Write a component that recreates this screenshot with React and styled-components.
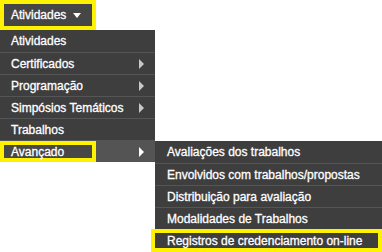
import React from 'react'
import styled, { createGlobalStyle, css } from 'styled-components'

const GlobalStyle = createGlobalStyle`
  html, body {
    margin: 0;
    padding: 0;
    background: #fff;
    overflow: hidden;
  }
  body {
    font-family: 'Liberation Sans', Arial, sans-serif;
    font-size: 12px;
    -webkit-text-stroke: 0.3px #fff;
  }
`

const yellow = '#fff200'

const Nav = styled.nav`
  display: flex;
  flex-direction: column;
  align-items: flex-start;
  width: 382px;
  height: 252px;
`

const TopButton = styled.div`
  box-sizing: border-box;
  height: 30px;
  width: 96px;
  display: flex;
  align-items: center;
  gap: 7px;
  padding-left: 7px;
  border: 4px solid ${yellow};
  background: #464646;
  color: #fff;
`

const DownCaret = styled.span`
  width: 0;
  height: 0;
  border-left: 4px solid transparent;
  border-right: 4px solid transparent;
  border-top: 5px solid #fff;
  margin-top: 1px;
`

const Menu = styled.ul`
  list-style: none;
  margin: 0;
  padding: 0;
  width: ${p => p.$width}px;
  background: #3e3e3e;
`

const Item = styled.li`
  position: relative;
  box-sizing: border-box;
  height: 22px;
  display: flex;
  align-items: center;
  justify-content: space-between;
  padding: 0 11px;
  color: #fff;
  border-top: 1px solid #555;
  background: ${p => (p.$active ? '#545454' : '#3e3e3e')};
  &:first-child {
    border-top: none;
  }
  ${p =>
    p.$marked &&
    css`
      padding-left: 0;
    `}
`

const Label = styled.span`
  white-space: nowrap;
  ${p =>
    p.$marked &&
    css`
      box-sizing: border-box;
      align-self: stretch;
      display: flex;
      align-items: center;
      width: 96px;
      padding-left: 7px;
      border: 4px solid ${yellow};
      background: #474747;
    `}
`

const RightCaret = styled.span`
  width: 0;
  height: 0;
  border-top: 5px solid transparent;
  border-bottom: 5px solid transparent;
  border-left: 5px solid ${p => (p.$active ? '#fff' : '#c8c8c8')};
`

const SubMenu = styled(Menu)`
  position: absolute;
  left: 100%;
  top: 0;
`

const SubItem = styled(Item)`
  padding-left: 12px;
  justify-content: flex-start;
  ${p =>
    p.$marked &&
    css`
      margin-left: -4px;
      padding-left: 12px;
      height: 23px;
      border: 4px solid ${yellow};
      &:first-child {
        border: 4px solid ${yellow};
      }
    `}
`

const mainItems = [
  { label: 'Atividades' },
  { label: 'Certificados', sub: true },
  { label: 'Programação', sub: true },
  { label: 'Simpósios Temáticos', sub: true },
  { label: 'Trabalhos' },
]

const advanced = [
  'Avaliações dos trabalhos',
  'Envolvidos com trabalhos/propostas',
  'Distribuição para avaliação',
  'Modalidades de Trabalhos',
  'Registros de credenciamento on-line',
]

export default function App() {
  return (
    <>
      <GlobalStyle />
      <Nav>
        <TopButton>
          Atividades
          <DownCaret />
        </TopButton>
        <Menu $width={155}>
          {mainItems.map(item => (
            <Item key={item.label}>
              <Label>{item.label}</Label>
              {item.sub && <RightCaret />}
            </Item>
          ))}
          <Item $active $marked>
            <Label $marked>Avançado</Label>
            <RightCaret $active />
            <SubMenu $width={227}>
              {advanced.map((label, i) => (
                <SubItem key={label} $marked={i === advanced.length - 1}>
                  {label}
                </SubItem>
              ))}
            </SubMenu>
          </Item>
        </Menu>
      </Nav>
    </>
  )
}
